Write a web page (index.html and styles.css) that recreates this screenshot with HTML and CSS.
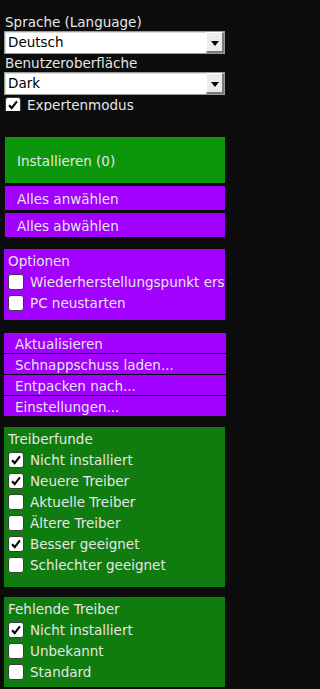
FILE: index.html
```html
<!DOCTYPE html>
<html lang="de">
<head>
<meta charset="utf-8">
<link rel="stylesheet" href="styles.css">
</head>
<body>
<div class="page">
<div class="top">
  <div class="lbl">Sprache (Language)</div>
  <div class="select"><span class="val">Deutsch</span><span class="drop"><svg width="8" height="5" viewBox="0 0 8 5"><path d="M0 0H8L4 5Z" fill="#000"/></svg></span></div>
  <div class="lbl">Benutzeroberfläche</div>
  <div class="select"><span class="val">Dark</span><span class="drop"><svg width="8" height="5" viewBox="0 0 8 5"><path d="M0 0H8L4 5Z" fill="#000"/></svg></span></div>
  <div class="row expert"><span class="cb on"><svg viewBox="0 0 16 16"><path d="M3.5 8.2L6.5 11.5L12.5 3.8" fill="none" stroke="#000" stroke-width="2.4"/></svg></span><span>Expertenmodus</span></div>
</div>

<div class="btn install">Installieren (0)</div>
<div class="btn purple">Alles anwählen</div>
<div class="btn purple">Alles abwählen</div>

<div class="group purplebg opts">
  <div class="gtitle">Optionen</div>
  <div class="row"><span class="cb"></span><span>Wiederherstellungspunkt erstellen</span></div>
  <div class="row"><span class="cb"></span><span>PC neustarten</span></div>
</div>

<div class="menu">
  <div class="mi">Aktualisieren</div>
  <div class="mi">Schnappschuss laden...</div>
  <div class="mi">Entpacken nach...</div>
  <div class="mi">Einstellungen...</div>
</div>

<div class="group greenbg found">
  <div class="gtitle">Treiberfunde</div>
  <div class="row"><span class="cb on"><svg viewBox="0 0 16 16"><path d="M3.5 8.2L6.5 11.5L12.5 3.8" fill="none" stroke="#000" stroke-width="2.4"/></svg></span><span>Nicht installiert</span></div>
  <div class="row"><span class="cb on"><svg viewBox="0 0 16 16"><path d="M3.5 8.2L6.5 11.5L12.5 3.8" fill="none" stroke="#000" stroke-width="2.4"/></svg></span><span>Neuere Treiber</span></div>
  <div class="row"><span class="cb"></span><span>Aktuelle Treiber</span></div>
  <div class="row"><span class="cb"></span><span>Ältere Treiber</span></div>
  <div class="row"><span class="cb on"><svg viewBox="0 0 16 16"><path d="M3.5 8.2L6.5 11.5L12.5 3.8" fill="none" stroke="#000" stroke-width="2.4"/></svg></span><span>Besser geeignet</span></div>
  <div class="row"><span class="cb"></span><span>Schlechter geeignet</span></div>
</div>

<div class="group greenbg missing">
  <div class="gtitle">Fehlende Treiber</div>
  <div class="row"><span class="cb on"><svg viewBox="0 0 16 16"><path d="M3.5 8.2L6.5 11.5L12.5 3.8" fill="none" stroke="#000" stroke-width="2.4"/></svg></span><span>Nicht installiert</span></div>
  <div class="row"><span class="cb"></span><span>Unbekannt</span></div>
  <div class="row"><span class="cb"></span><span>Standard</span></div>
</div>
</div>
</body>
</html>
```

FILE: styles.css
```css
html, body {
  margin: 0;
  padding: 0;
  background: #0c0c0c;
}
body {
  color: #e6e6e6;
  font-family: "DejaVu Sans", Verdana, sans-serif;
  font-size: 13.5px;
  overflow: hidden;
}
.page {
  width: 227px;
  height: 689px;
  overflow: hidden;
}
.top {
  padding: 13px 2px 0 4px;
  height: 111px;
  box-sizing: border-box;
  overflow: hidden;
}
.lbl {
  line-height: 18px;
  padding-left: 1px;
  white-space: nowrap;
}
.select {
  height: 23px;
  box-sizing: border-box;
  background: #fff;
  border: 1px solid #9a9a9a;
  box-shadow: inset 1px 1px 0 #dcdcdc;
  display: flex;
  align-items: stretch;
  color: #000;
}
.select .val {
  flex: 1;
  padding-left: 3px;
  line-height: 21px;
}
.select .drop {
  width: 18px;
  box-sizing: border-box;
  background: #ececec;
  border-top: 1px solid #fff;
  border-left: 1px solid #fff;
  border-right: 2px solid #7a7a7a;
  border-bottom: 2px solid #7a7a7a;
  display: flex;
  align-items: center;
  justify-content: center;
  padding-top: 2px;
}
.row {
  display: flex;
  align-items: center;
  gap: 6px;
  height: 21px;
  white-space: nowrap;
}
.expert {
  padding-left: 1px;
  height: 18px;
  align-items: flex-start;
  padding-top: 2px;
  line-height: 16px;
}
.cb {
  flex: none;
  width: 16px;
  height: 16px;
  box-sizing: border-box;
  background: #fff;
  border: 1px solid #3c3c3c;
  border-radius: 3px;
  display: flex;
}
.cb svg {
  width: 14px;
  height: 14px;
}
.btn {
  margin: 3px 2px 0 5px;
  height: 24px;
  padding-left: 12px;
  display: flex;
  align-items: center;
  padding-top: 1px;
  box-sizing: border-box;
  white-space: nowrap;
}
.install {
  margin-top: 26px;
  height: 46px;
  padding-top: 2px;
  background: #0b960b;
}
.purple, .purplebg {
  background: #a200ff;
}
.greenbg {
  background: #107c10;
}
.group {
  margin: 0 2px 0 4px;
  padding: 3px 4px 7px 4px;
  overflow: hidden;
}
.gtitle {
  line-height: 19px;
}
.opts {
  margin-top: 12px;
}
.found {
  margin-top: 11px;
  padding-bottom: 12px;
}
.missing {
  margin-top: 10px;
  padding-bottom: 5px;
}
.menu {
  margin: 13px 1px 0 4px;
  display: flex;
  flex-direction: column;
  gap: 1px;
}
.mi {
  background: #a200ff;
  height: 20px;
  box-sizing: border-box;
  padding: 2px 0 0 11px;
  line-height: 18px;
  white-space: nowrap;
}
```
